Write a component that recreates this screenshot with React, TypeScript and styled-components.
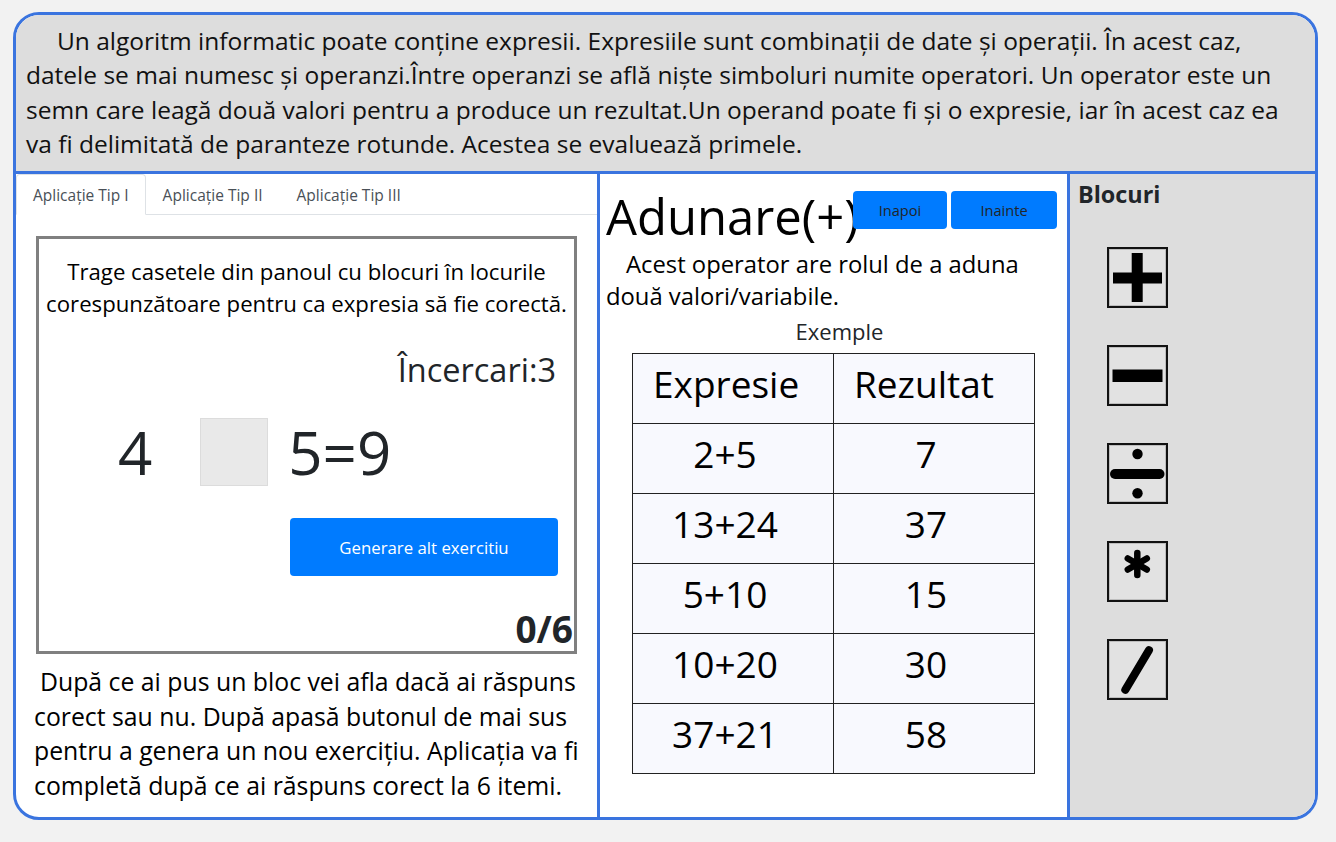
import React from "react";
import styled, { createGlobalStyle } from "styled-components";

const BLUE = "#3a74df";
const FONT = `"Open Sans", "Noto Sans", "DejaVu Sans", sans-serif`;

const Global = createGlobalStyle`
  html, body { margin: 0; padding: 0; background: #f2f2f2; }
  body { font-family: ${FONT}; color: #212529; }
  * { box-sizing: border-box; }
`;

const Frame = styled.div`
  margin: 12px 0 0 13px;
  width: 1305px;
  height: 808px;
  border: 3px solid ${BLUE};
  border-radius: 26px;
  overflow: hidden;
  display: flex;
  flex-direction: column;
  background: #fff;
`;

const Header = styled.header`
  flex: none;
  height: 159px;
  background: #dddddd;
  border-bottom: 3px solid ${BLUE};
  padding: 9px 10px 0 10px;
  font-size: 24.5px;
  line-height: 34.4px;
  text-indent: 31px;
  color: #111;
  margin: 0;
`;

const Main = styled.div`
  flex: 1;
  display: flex;
  min-height: 0;
`;

const LeftCol = styled.section`
  width: 584px;
  flex: none;
  border-right: 3px solid ${BLUE};
  display: flex;
  flex-direction: column;
`;

const Tabs = styled.nav`
  display: flex;
  height: 41px;
  border-bottom: 1px solid #dee2e6;
`;

const Tab = styled.div<{ $active?: boolean }>`
  padding: 8px 16px;
  font-size: 15.5px;
  line-height: 24px;
  color: #495057;
  border: 1px solid ${(p) => (p.$active ? "#dee2e6" : "transparent")};
  border-bottom-color: ${(p) => (p.$active ? "#fff" : "transparent")};
  border-top-left-radius: 4px;
  border-top-right-radius: 4px;
  background: ${(p) => (p.$active ? "#fff" : "transparent")};
  margin-bottom: -1px;
  white-space: nowrap;
`;

const GameBox = styled.div`
  margin: 21px 0 0 20px;
  width: 541px;
  height: 418px;
  border: 3px solid #808080;
  display: flex;
  flex-direction: column;
`;

const Instruction = styled.p`
  margin: 17px 0 0;
  padding: 0;
  font-size: 22.2px;
  line-height: 32px;
  text-align: center;
  color: #000;
`;

const Tries = styled.div`
  margin: 30px 18px 0 0;
  align-self: flex-end;
  font-size: 32.5px;
  line-height: 40px;
  color: #212529;
`;

const EqRow = styled.div`
  margin-top: 28px;
  height: 68px;
  display: flex;
  align-items: center;
  padding-left: 79px;
`;

const Digit = styled.span<{ $gap?: number }>`
  font-size: 60px;
  line-height: 68px;
  color: #212529;
  margin-left: ${(p) => p.$gap ?? 0}px;
`;

const Slot = styled.div`
  width: 68px;
  height: 68px;
  margin-left: 48px;
  background: #e9e9e9;
  border: 1px solid #dcdcdc;
`;

const GenButton = styled.button`
  margin: 32px 16px 0 0;
  align-self: flex-end;
  width: 268px;
  height: 58px;
  border: none;
  border-radius: 4px;
  background: #007bff;
  color: #fff;
  font-family: ${FONT};
  font-size: 16.8px;
`;

const Score = styled.div`
  margin-top: auto;
  align-self: flex-end;
  margin-right: 1px;
  font-size: 37px;
  font-weight: 700;
  line-height: 44px;
  color: #212529;
`;

const Hint = styled.p`
  margin: 10px 0 0;
  padding: 0 8px 0 18px;
  font-size: 24.8px;
  line-height: 34.5px;
  text-indent: 6px;
  color: #000;
`;

const MidCol = styled.section`
  width: 470px;
  flex: none;
  border-right: 3px solid ${BLUE};
  padding: 0 10px 0 6px;
`;

const TitleRow = styled.div`
  display: flex;
  align-items: flex-start;
`;

const Title = styled.h1`
  flex: 1;
  min-width: 0;
  margin: 15px 0 0;
  font-size: 49px;
  font-weight: 400;
  line-height: 54px;
  white-space: nowrap;
  color: #000;
`;

const NavButtons = styled.div`
  flex: none;
  margin-top: 17px;
  display: flex;
  gap: 4px;
`;

const NavButton = styled.button<{ $w: number }>`
  width: ${(p) => p.$w}px;
  height: 38px;
  border: none;
  border-radius: 4px;
  background: #007bff;
  color: #212529;
  font-family: ${FONT};
  font-size: 14.6px;
`;

const Desc = styled.p`
  margin: 5px 0 0;
  font-size: 23.8px;
  line-height: 32px;
  text-indent: 20px;
  color: #000;
`;

const Caption = styled.div`
  margin-top: 4px;
  padding-left: 16px;
  text-align: center;
  font-size: 22px;
  line-height: 30px;
  color: #212529;
`;

const Table = styled.table`
  margin: 7px 0 0 26px;
  width: 403px;
  border-collapse: collapse;
  background: #f8f9fe;
  color: #000;
`;

const Th = styled.th`
  height: 70px;
  width: 50%;
  border: 1.5px solid #222;
  padding: 0 0 10px 20px;
  text-align: left;
  font-weight: 400;
  font-size: 37px;
`;

const Td = styled.td`
  height: 70px;
  border: 1.5px solid #222;
  padding: 0 24px 10px 8px;
  text-align: center;
  font-size: 37px;
`;

const RightCol = styled.aside`
  flex: 1;
  background: #dddddd;
  padding: 6px 0 0 8px;
`;

const BlocksTitle = styled.h2`
  margin: 0;
  font-size: 23.4px;
  font-weight: 700;
  line-height: 28px;
  color: #212529;
`;

const BlockList = styled.div`
  margin-top: 39px;
  padding-left: 29px;
  display: flex;
  flex-direction: column;
  gap: 37px;
`;

const Block = styled.div`
  width: 61px;
  height: 61px;
  border: 2px solid #111;
  background: #e2e2e2;
  box-shadow: inset 0 0 0 1px #bdbdbd;
`;

const Icon: React.FC<{ children: React.ReactNode }> = ({ children }) => (
  <svg width="57" height="57" viewBox="2 2 57 57" style={{ display: "block" }}>
    {children}
  </svg>
);

const rows: [string, string][] = [
  ["2+5", "7"],
  ["13+24", "37"],
  ["5+10", "15"],
  ["10+20", "30"],
  ["37+21", "58"],
];

export default function App() {
  return (
    <>
      <Global />
      <Frame>
        <Header>
          Un algoritm informatic poate conține expresii. Expresiile sunt combinații de date și operații. În acest caz,
          datele se mai numesc și operanzi.Între operanzi se află niște simboluri numite operatori. Un operator este un
          semn care leagă două valori pentru a produce un rezultat.Un operand poate fi și o expresie, iar în acest caz ea
          va fi delimitată de paranteze rotunde. Acestea se evaluează primele.
        </Header>
        <Main>
          <LeftCol>
            <Tabs>
              <Tab $active>Aplicație Tip I</Tab>
              <Tab>Aplicație Tip II</Tab>
              <Tab>Aplicație Tip III</Tab>
            </Tabs>
            <GameBox>
              <Instruction>
                Trage casetele din panoul cu blocuri în locurile corespunzătoare pentru ca expresia să fie corectă.
              </Instruction>
              <Tries>Încercari:3</Tries>
              <EqRow>
                <Digit>4</Digit>
                <Slot />
                <Digit $gap={20}>5=9</Digit>
              </EqRow>
              <GenButton>Generare alt exercitiu</GenButton>
              <Score>0/6</Score>
            </GameBox>
            <Hint>
              După ce ai pus un bloc vei afla dacă ai răspuns corect sau nu. După apasă butonul de mai sus pentru a
              genera un nou exercițiu. Aplicația va fi completă după ce ai răspuns corect la 6 itemi.
            </Hint>
          </LeftCol>
          <MidCol>
            <TitleRow>
              <Title>Adunare(+)</Title>
              <NavButtons>
                <NavButton $w={94}>Inapoi</NavButton>
                <NavButton $w={106}>Inainte</NavButton>
              </NavButtons>
            </TitleRow>
            <Desc>Acest operator are rolul de a aduna două valori/variabile.</Desc>
            <Caption>Exemple</Caption>
            <Table>
              <thead>
                <tr>
                  <Th>Expresie</Th>
                  <Th>Rezultat</Th>
                </tr>
              </thead>
              <tbody>
                {rows.map(([e, r]) => (
                  <tr key={e}>
                    <Td>{e}</Td>
                    <Td>{r}</Td>
                  </tr>
                ))}
              </tbody>
            </Table>
          </MidCol>
          <RightCol>
            <BlocksTitle>Blocuri</BlocksTitle>
            <BlockList>
              <Block>
                <Icon>
                  <rect x="24.7" y="6" width="11" height="49" fill="#000" />
                  <rect x="6" y="25.5" width="49" height="11" fill="#000" />
                </Icon>
              </Block>
              <Block>
                <Icon>
                  <rect x="5.5" y="24.5" width="50" height="12.5" fill="#000" />
                </Icon>
              </Block>
              <Block>
                <Icon>
                  <circle cx="30.5" cy="11" r="5.2" fill="#000" />
                  <line x1="8" y1="31" x2="52.5" y2="31" stroke="#000" strokeWidth="10" strokeLinecap="round" />
                  <circle cx="30.5" cy="50.2" r="5.2" fill="#000" />
                </Icon>
              </Block>
              <Block>
                <Icon>
                  <g stroke="#000" strokeWidth="6.5" strokeLinecap="round">
                    <line x1="30.3" y1="12" x2="30.3" y2="34" />
                    <line x1="20.8" y1="17.5" x2="39.8" y2="28.5" />
                    <line x1="20.8" y1="28.5" x2="39.8" y2="17.5" />
                  </g>
                </Icon>
              </Block>
              <Block>
                <Icon>
                  <line x1="18.3" y1="50.9" x2="42" y2="11.1" stroke="#000" strokeWidth="8" strokeLinecap="round" />
                </Icon>
              </Block>
            </BlockList>
          </RightCol>
        </Main>
      </Frame>
    </>
  );
}
